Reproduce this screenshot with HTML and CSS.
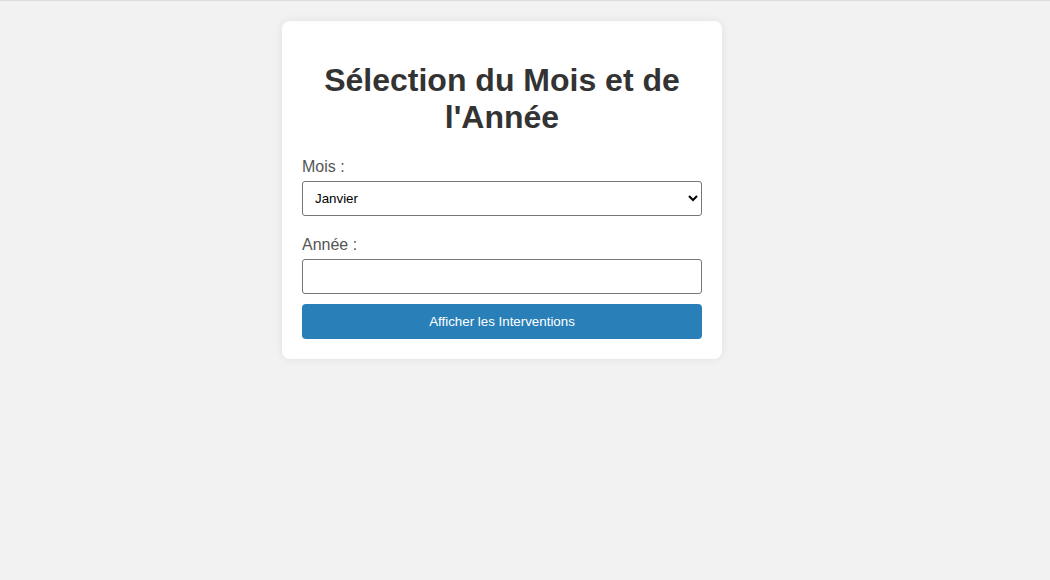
FILE: index.html
```
<!DOCTYPE html>
<html lang="fr">
<head>
<meta charset="utf-8">
<title>Sélection du Mois et de l'Année</title>
<link rel="stylesheet" href="styles.css">
</head>
<body>
<div class="page">
  <form class="card">
    <h1 class="title">Sélection du Mois et de l'Année</h1>
    <label class="label" for="mois">Mois :</label>
    <select id="mois" class="field select">
      <option>Janvier</option>
      <option>Février</option>
      <option>Mars</option>
      <option>Avril</option>
      <option>Mai</option>
      <option>Juin</option>
      <option>Juillet</option>
      <option>Août</option>
      <option>Septembre</option>
      <option>Octobre</option>
      <option>Novembre</option>
      <option>Décembre</option>
    </select>
    <label class="label" for="annee">Année :</label>
    <input id="annee" class="field input" type="number">
    <button class="button" type="button">Afficher les Interventions</button>
  </form>
</div>
</body>
</html>
```
FILE: styles.css
```
html, body {
  margin: 0;
  padding: 0;
}
body {
  background: #f2f2f2;
  border-top: 1px solid #dcdcdc;
  font-family: "Liberation Sans", Arial, sans-serif;
  min-height: 579px;
}
.page {
  padding: 20px 46px 0 0;
}
.card {
  box-sizing: border-box;
  width: 440px;
  margin: 0 auto;
  padding: 20px;
  background: #fff;
  border-radius: 8px;
  box-shadow: 0 0 10px rgba(0, 0, 0, 0.08);
  display: flex;
  flex-direction: column;
}
.title {
  margin: 21px 0 22px;
  font-size: 32px;
  line-height: 37px;
  font-weight: bold;
  color: #333;
  text-align: center;
}
.label {
  display: block;
  font-size: 16px;
  line-height: 18px;
  color: #555;
  margin-bottom: 5px;
}
.field {
  box-sizing: border-box;
  width: 100%;
  height: 35px;
  border: 1px solid #767676;
  border-radius: 3px;
  background: #fff;
  font-family: "Liberation Sans", Arial, sans-serif;
  color: #000;
}
.select {
  padding: 0 6px 0 8px;
  font-size: 13.33px;
  margin-bottom: 20px;
}
.input {
  padding: 8px;
  font-size: 16px;
  margin-bottom: 10px;
}
.button {
  height: 35px;
  border: none;
  border-radius: 4px;
  background: #2980b9;
  color: #fff;
  font-family: "Liberation Sans", Arial, sans-serif;
  font-size: 13.33px;
  cursor: pointer;
}
```
